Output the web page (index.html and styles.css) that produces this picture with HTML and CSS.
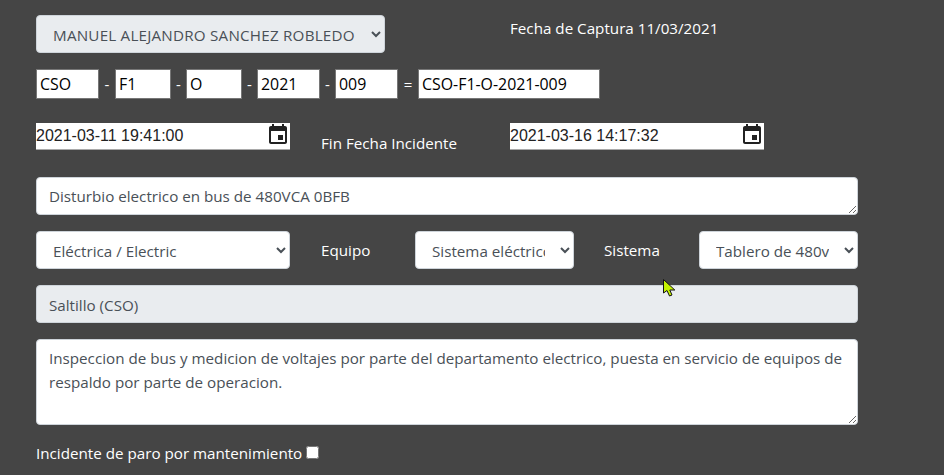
FILE: index.html
```html
<!DOCTYPE html>
<html lang="es">
<head>
<meta charset="utf-8">
<title>Incidente</title>
<link rel="stylesheet" href="styles.css">
</head>
<body>
<form class="page">
  <div class="row row-top">
    <select class="control select w-349 locked caps"><option>MANUEL ALEJANDRO SANCHEZ ROBLEDO</option></select>
    <span class="label capture">Fecha de Captura 11/03/2021</span>
  </div>
  <div class="row row-code">
    <input class="code w-63" value="CSO"><span class="sep s-first">-</span>
    <input class="code w-56" value="F1"><span class="sep s-dash">-</span>
    <input class="code w-56" value="O"><span class="sep s-dash">-</span>
    <input class="code w-63" value="2021"><span class="sep s-dash">-</span>
    <input class="code w-63" value="009"><span class="sep s-eq">=</span>
    <input class="code w-182" value="CSO-F1-O-2021-009">
  </div>
  <div class="row row-date">
    <div class="date">
      <input class="date-input" value="2021-03-11 19:41:00">
      <svg class="cal" viewBox="0 0 24 24" width="24" height="24" aria-hidden="true"><path d="M19 3h-1V1h-2v2H8V1H6v2H5c-1.100 0-2 .9-2 2v14c0 1.100.9 2 2 2h14c1.100 0 2-.9 2-2V5c0-1.100-.9-2-2-2zm0 16H5V8h14v11zm-2-7h-5v5h5v-5z"/></svg>
    </div>
    <span class="label end-label">Fin Fecha Incidente</span>
    <div class="date">
      <input class="date-input" value="2021-03-16 14:17:32">
      <svg class="cal" viewBox="0 0 24 24" width="24" height="24" aria-hidden="true"><path d="M19 3h-1V1h-2v2H8V1H6v2H5c-1.100 0-2 .9-2 2v14c0 1.100.9 2 2 2h14c1.100 0 2-.9 2-2V5c0-1.100-.9-2-2-2zm0 16H5V8h14v11zm-2-7h-5v5h5v-5z"/></svg>
    </div>
  </div>
  <textarea class="control area area-title">Disturbio electrico en bus de 480VCA 0BFB</textarea>
  <div class="row row-system">
    <select class="control select w-254"><option>Eléctrica / Electric</option></select>
    <span class="label l-equipo">Equipo</span>
    <select class="control select w-159"><option>Sistema eléctrico</option></select>
    <span class="label l-sistema">Sistema</span>
    <select class="control select w-159"><option>Tablero de 480v</option></select>
  </div>
  <input class="control field locked" value="Saltillo (CSO)" readonly>
  <textarea class="control area area-body">Inspeccion de bus y medicion de voltajes por parte del departamento electrico, puesta en servicio de equipos de respaldo por parte de operacion.</textarea>
  <label class="label check-row">Incidente de paro por mantenimiento <input type="checkbox" class="check"></label>
</form>
<svg class="pointer" viewBox="0 0 15 20" width="15" height="20" aria-hidden="true"><path d="M1.500 1.500v13.500l3.500-2.500 2.500 5.500 2.500-1-2.200-5h5z" fill="#c4f200" stroke="#111" stroke-width="1"/></svg>
</body>
</html>
```
FILE: styles.css
```css
* { box-sizing: border-box; }
html, body { height: 100%; }
body {
  margin: 0;
  background: #454545;
  color: #fff;
  font-family: "Open Sans", "Liberation Sans", sans-serif;
  font-size: 15.200px;
  overflow: hidden;
  position: relative;
}
.page { display: flex; flex-direction: column; width: 894px; padding: 15px 0 0 36px; }
.row { display: flex; align-items: center; }
.label { color: #fff; font-size: 15.200px; line-height: 22px; }
.control {
  height: 38px;
  border: 1px solid #ced4da;
  border-radius: 4px;
  background-color: #fff;
  color: #495057;
  font-family: "Open Sans", "Liberation Sans", sans-serif;
  font-size: 15.200px;
  line-height: 24px;
  margin: 0;
}
.select { padding: 7px 12px 5px; }
.caps { letter-spacing: .22px; }
.locked { background-color: #e9ecef; }
.w-349 { width: 349px; }
.w-254 { width: 254px; }
.w-159 { width: 159px; }
.capture { margin-left: 125px; position: relative; bottom: 6px; }
.row-code { margin-top: 16px; height: 30px; }
.code {
  height: 30px;
  padding: 1px 3px;
  border: 1px solid #767676;
  border-radius: 0;
  background: #fff;
  color: #000;
  font-family: "Open Sans", "Liberation Sans", sans-serif;
  font-size: 15.900px;
  margin: 0;
}
.w-63 { width: 63px; }
.w-56 { width: 56px; }
.w-182 { width: 182px; }
.sep { text-align: center; font-size: 15px; }
.s-first { width: 16px; }
.s-dash { width: 15px; }
.s-eq { width: 20px; }
.row-date { margin-top: 24px; height: 27px; align-items: flex-start; }
.date {
  display: flex;
  align-items: center;
  width: 254px;
  height: 27px;
  background: #fff;
  border-bottom: 1px solid #a9a9a9;
  flex: none;
}
.date-input {
  flex: 1;
  min-width: 0;
  height: 26px;
  border: 0;
  padding: 0;
  margin: 0;
  background: transparent;
  color: #222;
  font-family: "Liberation Sans", Arial, sans-serif;
  font-size: 16px;
  outline: 0;
}
.cal { flex: none; margin-bottom: 3px; fill: #222; }
.end-label { width: 220px; padding-left: 31px; margin-top: 9px; }
.area { display: block; width: 822px; padding: 6px 12px; resize: vertical; }
.area-title { margin-top: 27px; }
.row-system { margin-top: 16px; }
.l-equipo { width: 125px; padding-left: 31px; }
.l-sistema { width: 125px; padding-left: 30px; }
.field { display: block; width: 822px; margin-top: 16px; padding: 7px 12px 5px; }
.area-body { height: 86px; margin-top: 16px; }
.check-row { display: flex; align-items: center; margin-top: 17px; }
.check { width: 13px; height: 13px; margin: 0 0 2px 4px; }
.pointer { position: absolute; left: 662px; top: 278px; }
```
